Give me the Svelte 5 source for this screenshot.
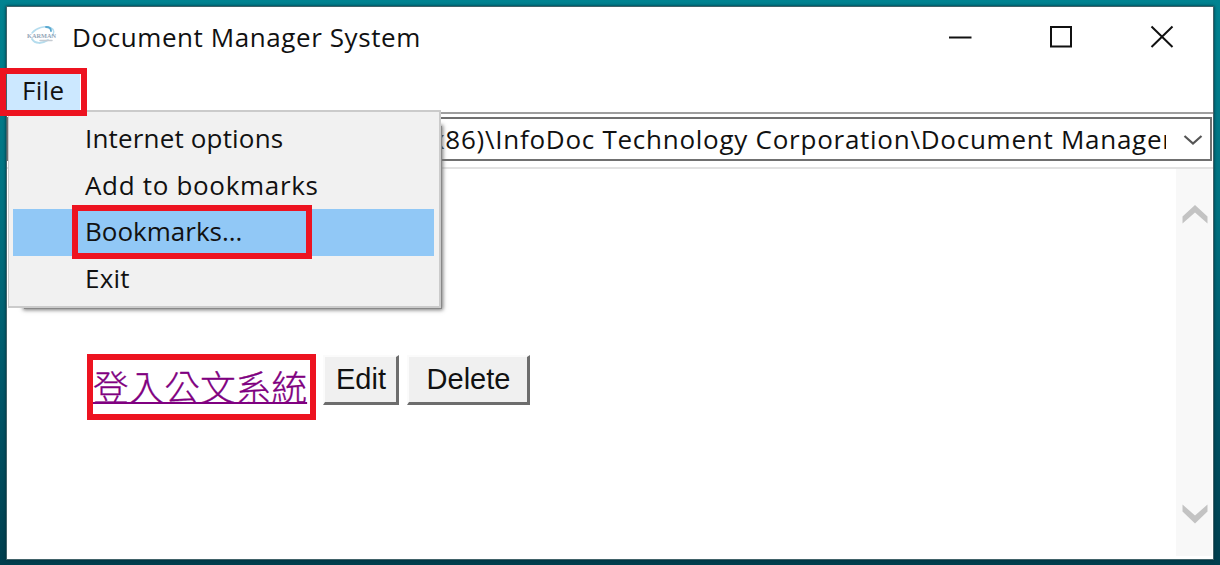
<script>
  const items = ['Internet options', 'Add to bookmarks', 'Bookmarks...', 'Exit'];
  const selected = 2;
  const spacing = [0.17, 0.68, 0, 0.2];
</script>

<div class="desktop">
  <div class="window">
    <header class="titlebar">
      <svg class="logo" width="34" height="22" viewBox="0 0 34 22">
        <g fill="none" stroke-linecap="round">
          <path d="M7 8C11 3 20 0 26 3c4 2 3 5 1 8" stroke="#b5dcee" stroke-width="1.5" />
          <path d="M7 14c3 5 10 5 16 1" stroke="#b4dced" stroke-width="2" />
          <path d="M21 2c4 0 5 2 5 4" stroke="#5aa9d0" stroke-width="1.8" />
          <path d="M15 15.500h12" stroke="#c5cbd2" stroke-width="1.500" />
        </g>
        <text x="2" y="12.500" textLength="29" lengthAdjust="spacingAndGlyphs">KARMAN</text>
      </svg>
      <span class="title">Document Manager System</span>
      <div class="controls">
        <svg width="24" height="24" viewBox="0 0 24 24"><path d="M1 12.500h22.500" /></svg>
        <svg width="24" height="24" viewBox="0 0 24 24"><path d="M2 2h20v19.500h-20z" /></svg>
        <svg width="24" height="24" viewBox="0 0 24 24"><path d="M1.500 1.500l21 20.500M22.500 1.500L1.500 22" /></svg>
      </div>
    </header>

    <nav class="menubar"><span class="file">File</span></nav>

    <div class="address">
      <div class="combo">
        <span class="path">x86)\InfoDoc Technology Corporation\Document Manager</span>
        <svg width="44" height="40" viewBox="0 0 44 40"><path d="M18.500 17l8.500 7.500L35.500 17" /></svg>
      </div>
    </div>

    <main class="content">
      <div class="page">
        <a class="link" href="#login">登入公文系統</a>
        <button class="edit">Edit</button>
        <button class="delete">Delete</button>
      </div>
      <div class="scroll">
        <svg width="26" height="20" viewBox="0 0 26 20"><path d="M0.500 12.500L13 1l12.500 11.500v7L13 8.500 0.500 19.500z" /></svg>
        <svg width="26" height="20" viewBox="0 0 26 20"><path d="M0.500 0.500L13 11.500 25.500 0.500v7L13 19.500 0.500 7.500z" /></svg>
      </div>
    </main>
  </div>

  <div class="menu-shadow"></div>
  <div class="menu">
    {#each items as item, i}
      <div class="item" class:on={i === selected}><span style="letter-spacing: {spacing[i]}px">{item}</span></div>
    {/each}
  </div>
  <div class="mark mark-file"></div>
  <div class="mark mark-bookmarks"></div>
  <div class="mark mark-link"></div>
</div>

<style>
  :global(body) { margin: 0; overflow: hidden; }
  * { box-sizing: border-box; }
  .desktop {
    position: relative;
    width: 1220px;
    height: 565px;
    padding: 6px 6px 5px;
    background: linear-gradient(180deg, #008391 0, #007180 38%, #005466 72%, #003f4e 100%);
    font: 26px/36px "Open Sans", "Noto Sans", sans-serif;
    color: #111;
  }
  .window {
    display: flex;
    flex-direction: column;
    height: 554px;
    border: 1px solid #42636a;
    background: #fff;
    box-shadow: 0 0 3px #00303c;
  }
  .titlebar { display: flex; align-items: center; height: 61px; padding-left: 18px; }
  .logo { margin-right: 13px; margin-top: -3px; overflow: visible; }
  .logo text { font: bold 7px "Liberation Serif", serif; fill: #93a5b8; }
  .title { margin-top: -1px; letter-spacing: 0.58px; }
  .controls { display: flex; gap: 77px; margin: -2px 39px 0 auto; }
  .controls svg { fill: none; stroke: #111; stroke-width: 2; }
  .menubar { height: 44px; }
  .file {
    display: block;
    width: 73px;
    height: 38px;
    margin-top: 4px;
    padding-left: 15px;
    background: #cce8ff;
    line-height: 36px;
    letter-spacing: 0.3px;
  }
  .address {
    height: 57px;
    padding: 3px 1px 0 0;
    border-top: 2px solid #9f9f9f;
    border-bottom: 2px solid #e2e2e2;
    background: #fff;
  }
  .combo {
    display: flex;
    height: 44px;
    border: 2px solid #707070;
    justify-content: space-between;
  }
  .path {
    width: 737px;
    margin-left: 422px;
    overflow: hidden;
    white-space: nowrap;
    line-height: 40px;
    letter-spacing: 0.74px;
  }
  .combo svg { flex: none; fill: none; stroke: #555; stroke-width: 2.200; }
  .content { display: flex; flex: 1; }
  .page { display: flex; flex: 1; align-items: flex-start; padding: 186px 0 0 86px; }
  .link {
    width: 217px;
    height: 50px;
    color: #800080;
    font: 300 35.700px/61px "Noto Sans CJK TC", sans-serif;
    -webkit-text-stroke: 0.300px #800080;
    white-space: nowrap;
    text-decoration: underline;
    text-decoration-thickness: 2px;
    text-underline-offset: 1px;
  }
  button {
    height: 50px;
    margin: 0;
    padding: 0 0 1px 1px;
    border: solid;
    border-width: 2px 3px 3px 2px;
    border-color: #fbfbfb #6d6d6d #6d6d6d #fbfbfb;
    background: #f0f0f0;
    color: #111;
    font: 29px "Liberation Sans", Arial, sans-serif;
  }
  .edit { width: 76px; margin-left: 13px; }
  .delete { width: 123px; margin-left: 8px; }
  .scroll {
    display: flex;
    flex-direction: column;
    justify-content: space-between;
    width: 36px;
    margin: 0 1px 3px 0;
    padding: 35px 4px 32px 6px;
    background: #f8f8f8;
  }
  .scroll svg { fill: #c3c3c3; }
  .menu {
    position: absolute;
    left: 8px;
    top: 110px;
    width: 433px;
    height: 198px;
    padding: 4px 5px 6px 4px;
    border: 2px solid #cbcbcb;
    border-left-width: 1px;
    background: #f1f1f1;
  }
  .menu-shadow {
    position: absolute;
    left: 24px;
    top: 126px;
    width: 418px;
    height: 183px;
    background: #888;
    box-shadow: 0 0 4px 1px #777;
  }
  .item { height: 46.500px; padding-left: 72px; line-height: 45px; white-space: nowrap; }
  .on { background: #91c8f6; }
  .mark { position: absolute; border: 6px solid #ed1320; }
  .mark-file { left: 0; top: 68px; width: 87px; height: 48px; }
  .mark-bookmarks { left: 72px; top: 205px; width: 240px; height: 54px; }
  .mark-link { left: 87px; top: 354px; width: 229px; height: 66px; }
</style>
